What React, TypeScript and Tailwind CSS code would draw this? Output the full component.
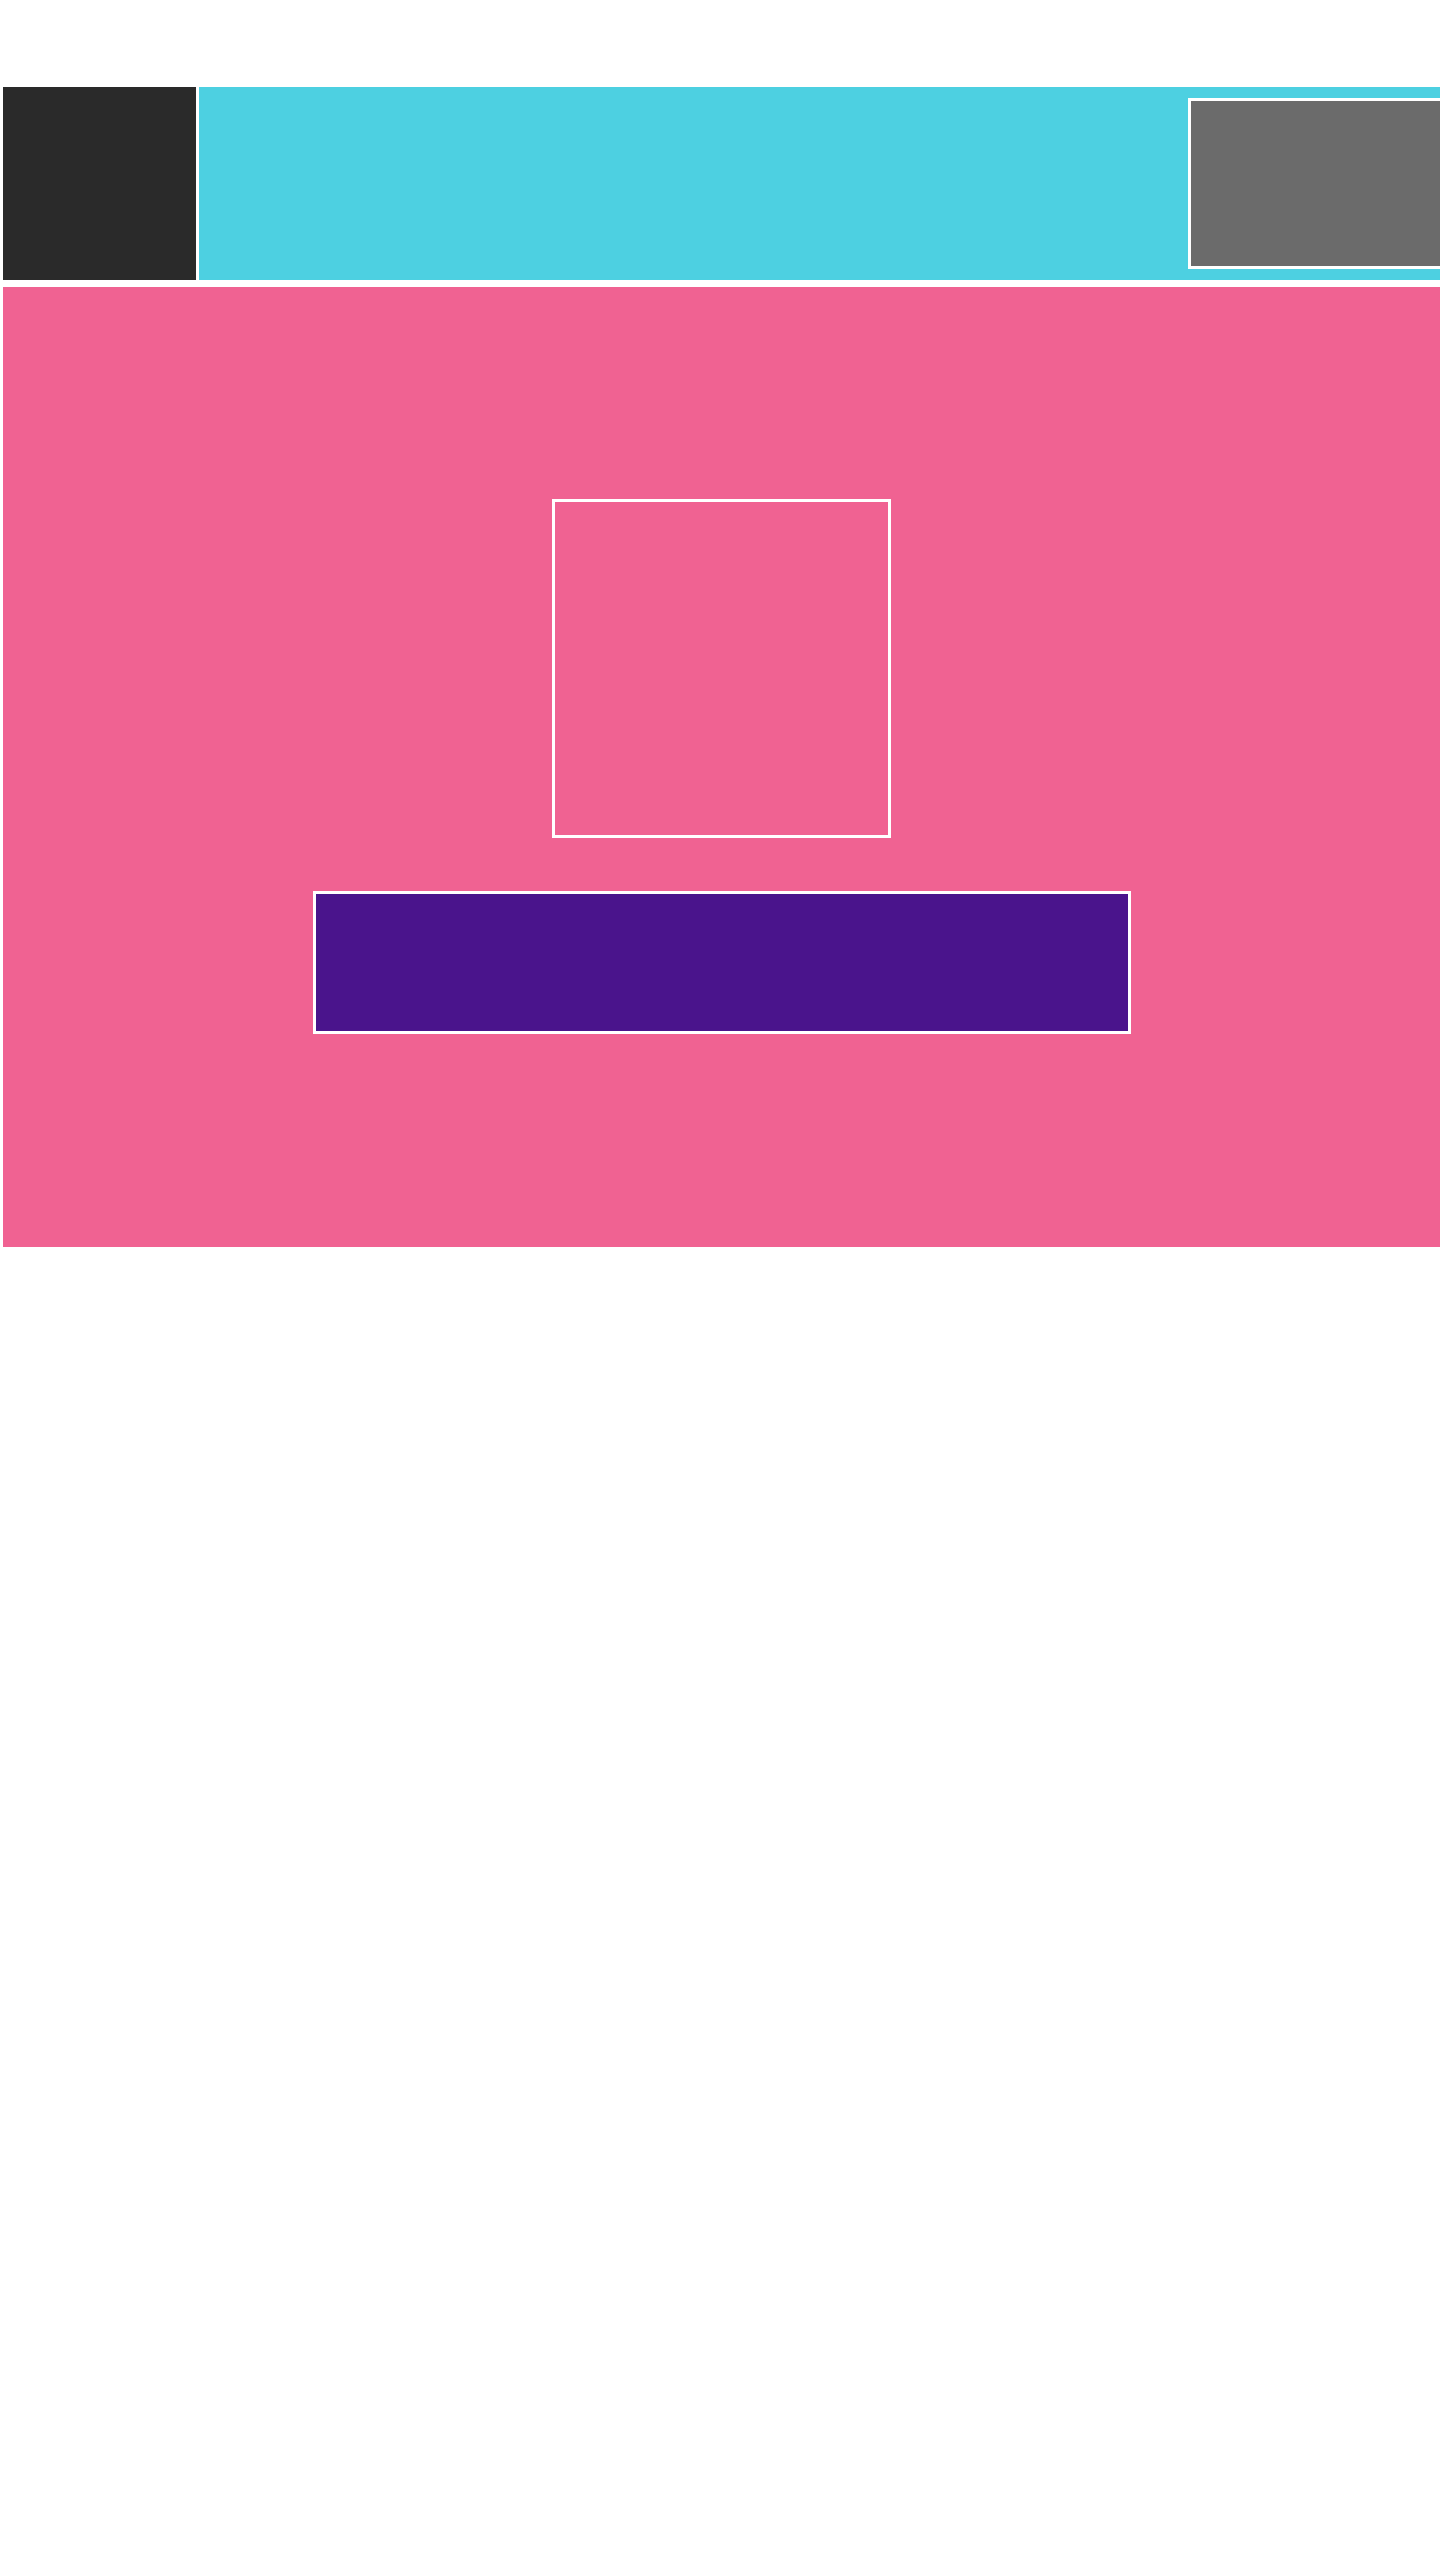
export default function App() {
  return (
    <div className="min-h-[2560px] bg-white overflow-hidden pt-[87px] pl-[3px]">
      {/* header strip */}
      <div className="flex gap-[3px] h-[193px]">
        <div className="w-[193px] shrink-0 bg-[#2a2a2a]" />
        <div className="flex-1 bg-[#4dd0e1] overflow-hidden py-[11px] pl-[989px]">
          <div className="w-[280px] h-full border-[3px] border-white bg-[#6b6b6b]" />
        </div>
      </div>

      {/* main panel */}
      <div className="mt-[7px] h-[960px] bg-[#f06292] flex flex-col items-center pt-[212px] gap-[53px]">
        <div className="w-[339px] h-[339px] border-[3px] border-white" />
        <div className="w-[818px] h-[143px] border-[3px] border-white bg-[#4a148c]" />
      </div>
    </div>
  )
}
